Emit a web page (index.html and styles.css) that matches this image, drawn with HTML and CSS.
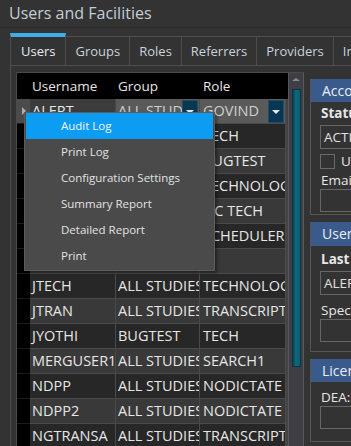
FILE: index.html
```html
<!DOCTYPE html>
<html lang="en">
<head>
    <meta charset="UTF-8">
    <title>Users and Facilities</title>
    <link rel="stylesheet" href="styles.css">
</head>
<body>

<div class="window">
    <div class="titlebar">Users and Facilities</div>

    <div class="tabs">
        <div class="tab active">Users</div>
        <div class="tab">Groups</div>
        <div class="tab">Roles</div>
        <div class="tab">Referrers</div>
        <div class="tab">Providers</div>
        <div class="tab">Imaging</div>
    </div>

    <div class="panel">
        <div class="grid-area">
            <div class="grid">
                <div class="row head">
                    <div class="cell sel"></div>
                    <div class="cell user">Username</div>
                    <div class="cell group">Group</div>
                    <div class="cell role">Role</div>
                    <div class="cell fill"></div>
                </div>
                <div class="row current">
                    <div class="cell sel"><span class="marker"></span></div>
                    <div class="cell user">ALERT</div>
                    <div class="cell group combo"><span class="txt">ALL STUDIES</span><span class="drop"></span></div>
                    <div class="cell role combo"><span class="txt">GOVIND</span><span class="drop"></span></div>
                    <div class="cell fill"></div>
                </div>
                <!-- rows below are covered by the menu on the left -->
                <div class="row">
                    <div class="cell sel"></div>
                    <div class="cell user"></div>
                    <div class="cell group"></div>
                    <div class="cell role">TECH</div>
                    <div class="cell fill"></div>
                </div>
                <div class="row">
                    <div class="cell sel"></div>
                    <div class="cell user"></div>
                    <div class="cell group"></div>
                    <div class="cell role">BUGTEST</div>
                    <div class="cell fill"></div>
                </div>
                <div class="row">
                    <div class="cell sel"></div>
                    <div class="cell user"></div>
                    <div class="cell group"></div>
                    <div class="cell role">TECHNOLOGIST</div>
                    <div class="cell fill"></div>
                </div>
                <div class="row">
                    <div class="cell sel"></div>
                    <div class="cell user"></div>
                    <div class="cell group"></div>
                    <div class="cell role">QC TECH</div>
                    <div class="cell fill"></div>
                </div>
                <div class="row">
                    <div class="cell sel"></div>
                    <div class="cell user"></div>
                    <div class="cell group"></div>
                    <div class="cell role">SCHEDULER</div>
                    <div class="cell fill"></div>
                </div>
                <div class="row">
                    <div class="cell sel"></div>
                    <div class="cell user"></div>
                    <div class="cell group"></div>
                    <div class="cell role"></div>
                    <div class="cell fill"></div>
                </div>
                <div class="row">
                    <div class="cell sel"></div>
                    <div class="cell user">JTECH</div>
                    <div class="cell group">ALL STUDIES</div>
                    <div class="cell role">TECHNOLOGIST</div>
                    <div class="cell fill"></div>
                </div>
                <div class="row">
                    <div class="cell sel"></div>
                    <div class="cell user">JTRAN</div>
                    <div class="cell group">ALL STUDIES</div>
                    <div class="cell role">TRANSCRIPTIONIST</div>
                    <div class="cell fill"></div>
                </div>
                <div class="row">
                    <div class="cell sel"></div>
                    <div class="cell user">JYOTHI</div>
                    <div class="cell group">BUGTEST</div>
                    <div class="cell role">TECH</div>
                    <div class="cell fill"></div>
                </div>
                <div class="row">
                    <div class="cell sel"></div>
                    <div class="cell user">MERGUSER1</div>
                    <div class="cell group">ALL STUDIES</div>
                    <div class="cell role">SEARCH1</div>
                    <div class="cell fill"></div>
                </div>
                <div class="row">
                    <div class="cell sel"></div>
                    <div class="cell user">NDPP</div>
                    <div class="cell group">ALL STUDIES</div>
                    <div class="cell role">NODICTATE</div>
                    <div class="cell fill"></div>
                </div>
                <div class="row">
                    <div class="cell sel"></div>
                    <div class="cell user">NDPP2</div>
                    <div class="cell group">ALL STUDIES</div>
                    <div class="cell role">NODICTATE</div>
                    <div class="cell fill"></div>
                </div>
                <div class="row">
                    <div class="cell sel"></div>
                    <div class="cell user">NGTRANSA</div>
                    <div class="cell group">ALL STUDIES</div>
                    <div class="cell role">TRANSCRIPTIONIST</div>
                    <div class="cell fill"></div>
                </div>
            </div>

            <div class="vscroll">
                <div class="up"><span class="arrow-up"></span></div>
                <div class="track"><div class="thumb"></div></div>
            </div>
        </div>

        <div class="side">
            <div class="gbox account">
                <div class="gbox-head">Account</div>
                <div class="gbox-body">
                    <div class="label bold">Status</div>
                    <div class="input">ACTIVE</div>
                    <div class="check-row"><span class="check"></span>User must change password</div>
                    <div class="label email">Email</div>
                    <div class="input tall"></div>
                </div>
            </div>
            <div class="gbox user-box">
                <div class="gbox-head">User</div>
                <div class="gbox-body">
                    <div class="label bold">Last Name</div>
                    <div class="input">ALERT</div>
                    <div class="label spec">Speciality</div>
                    <div class="input tall"></div>
                </div>
            </div>
            <div class="gbox licence">
                <div class="gbox-head">Licence</div>
                <div class="gbox-body">
                    <div class="label">DEA:</div>
                    <div class="input tall"></div>
                </div>
            </div>
            <div class="gbox">
                <div class="gbox-head">Other</div>
            </div>
        </div>
    </div>

    <!-- context menu over the grid -->
    <div class="menu">
        <div class="item hot">Audit Log</div>
        <div class="item">Print Log</div>
        <div class="item">Configuration Settings</div>
        <div class="item">Summary Report</div>
        <div class="item">Detailed Report</div>
        <div class="item">Print</div>
    </div>
</div>

</body>
</html>
```

FILE: styles.css
```css
body {
    margin: 0;
    background-color: #333333;
    font-family: 'Open Sans', 'Noto Sans', sans-serif;
    color: #e6e6e6;
}
.window {
    position: relative;
    width: 351px;
    height: 446px;
    overflow: hidden;
    background-color: #333333;
}
.titlebar {
    height: 27px;
    line-height: 27px;
    padding-left: 9px;
    font-size: 16px;
    color: #c4cdd6;
    border-bottom: 1px solid #2b2b2b;
}

/* tabs */
.tabs {
    display: flex;
    align-items: flex-end;
    height: 37px;
    margin-left: 10px;
}
.tab {
    flex: none;
    height: 28px;
    line-height: 28px;
    padding: 0 9px;
    font-size: 13px;
    color: #c8d2dc;
    border: 1px solid #4e4e4e;
    border-bottom: none;
    border-left: none;
    background-color: #333333;
}
.tab.active {
    height: 28px;
    padding: 0 10px;
    border-left: 1px solid #4e4e4e;
    border-top: 4px solid #3daee9;
    color: #e4ebf2;
}
.panel {
    display: flex;
    height: 380px;
    margin-left: 10px;
    border-left: 1px solid #4e4e4e;
    border-top: 1px solid #4e4e4e;
}

/* grid */
.grid-area {
    flex: none;
    display: flex;
    margin: 6px 0 0 5px;
    border-left: 1px solid #4a4a4a;
    border-top: 1px solid #4a4a4a;
}
.grid {
    width: 271px;
    background-color: #3c3c3c;
}
.row {
    display: flex;
    height: 25px;
    font-size: 14.5px;
}
.row:nth-child(odd) .cell { background-color: #272727; }
.row:nth-child(even) .cell { background-color: #393939; }
.cell {
    flex: none;
    box-sizing: border-box;
    height: 25px;
    line-height: 24px;
    padding-left: 2px;
    white-space: nowrap;
    overflow: hidden;
    border-right: 1px solid #4a4a4a;
    border-bottom: 1px solid #4a4a4a;
}
.row .cell.sel { width: 13px; background-color: #000; border-right: none; border-bottom: 1px solid #1c1c1c; }
.cell.user { width: 86px; }
.cell.group { width: 84px; }
.cell.role { width: 86px; padding-left: 3px; }
.row .cell.fill { width: 2px; padding: 0; border: none; background-color: #444; }

.row.head { height: 26px; font-size: 13.5px; }
.row.head .cell {
    height: 26px;
    line-height: 26px;
    background-color: #000;
    border: none;
}

.row.current .cell.sel { background-color: #4b4b4b; position: relative; }
.marker {
    position: absolute;
    left: 5px;
    top: 8px;
    width: 0;
    height: 0;
    border-top: 4px solid transparent;
    border-bottom: 4px solid transparent;
    border-left: 4px solid #b0b0b0;
}
.row.current .cell.user { background-color: #3c3c3c; }
.row.current .cell.combo {
    display: flex;
    background-color: #5a5a5a;
    color: #d0d0d0;
}
.combo .txt {
    flex: 1;
    overflow: hidden;
}
.drop {
    flex: none;
    position: relative;
    width: 14px;
    height: 21px;
    margin: 1px 1px 0 0;
    background-color: #063754;
    border: 1px solid #2a4a60;
}
.drop::after {
    content: '';
    position: absolute;
    left: 3px;
    top: 9px;
    border-left: 4px solid transparent;
    border-right: 4px solid transparent;
    border-top: 4px solid #e8e8e8;
}

/* scrollbar */
.vscroll {
    flex: none;
    box-sizing: border-box;
    width: 16px;
    background-color: #3f3e46;
    border-left: 1px solid #57565e;
    border-right: 1px solid #5a5a5a;
}
.up {
    height: 14px;
    position: relative;
}
.arrow-up {
    position: absolute;
    left: 3px;
    top: 5px;
    border-left: 4px solid transparent;
    border-right: 4px solid transparent;
    border-bottom: 3px solid #8a8a8a;
}
.track {
    padding: 2px 2px 0 3px;
}
.thumb {
    height: 276px;
    background: linear-gradient(90deg, #0a4150, #0d6a7c 40%, #0b5e70);
    border: 1px solid #0a3644;
}

/* right side */
.side {
    flex: none;
    width: 200px;
    margin-left: 6px;
    padding-top: 13px;
    display: flex;
    flex-direction: column;
    gap: 7px;
}
.gbox {
    border: 1px solid #555555;
    border-top: none;
}
.gbox-head {
    height: 23px;
    line-height: 23px;
    padding-left: 11px;
    background-color: #3a5a8c;
    color: #e8eef5;
    font-size: 14px;
}
.user-box .gbox-head { height: 24px; line-height: 24px; }
.gbox-body {
    display: flex;
    flex-direction: column;
    padding: 2px 0 0 9px;
    font-size: 13.5px;
}
.account .gbox-body { height: 110px; }
.user-box .gbox-body { height: 101px; padding-top: 4px; }
.licence .gbox-body { height: 53px; padding-top: 6px; }
.label {
    height: 18px;
    line-height: 18px;
    padding-left: 1px;
    white-space: nowrap;
}
.label.bold { font-weight: bold; }
.label.email { margin-top: 2px; }
.label.spec { margin-top: 6px; }
.input {
    box-sizing: border-box;
    height: 24px;
    line-height: 22px;
    margin-top: 3px;
    padding-left: 3px;
    border: 1px solid #666666;
    color: #e0e0e0;
}
.input.tall { height: 23px; margin-top: 0; }
.check-row {
    display: flex;
    align-items: center;
    gap: 6px;
    height: 16px;
    margin-top: 4px;
    white-space: nowrap;
}
.check {
    flex: none;
    width: 13px;
    height: 13px;
    border: 1px solid #6a6a6a;
}

/* context menu */
.menu {
    position: absolute;
    left: 24px;
    top: 112px;
    width: 187px;
    padding: 0 1px 1px 1px;
    background-color: #4a4a4a;
    border: 1px solid #5c5c5c;
    box-shadow: 2px 2px 3px rgba(0, 0, 0, 0.4);
}
.item {
    height: 26px;
    line-height: 26px;
    padding-left: 35px;
    font-size: 11.5px;
    color: #e2e2e2;
}
.item.hot {
    background-color: #0c9cf2;
    color: #f2f6fa;
}
```
